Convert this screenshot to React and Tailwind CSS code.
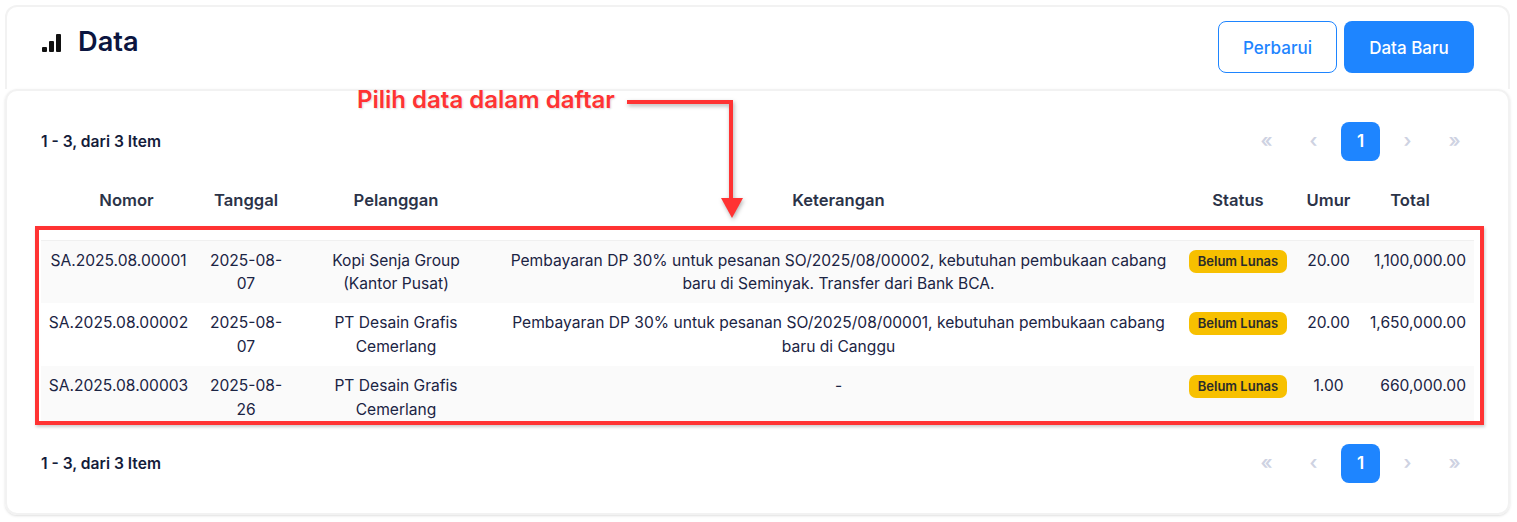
const rows = [
  {
    nomor: "SA.2025.08.00001",
    tanggal: "2025-08-07",
    pelanggan: "Kopi Senja Group (Kantor Pusat)",
    ket: "Pembayaran DP 30% untuk pesanan SO/2025/08/00002, kebutuhan pembukaan cabang baru di Seminyak. Transfer dari Bank BCA.",
    umur: "20.00",
    total: "1,100,000.00",
  },
  {
    nomor: "SA.2025.08.00002",
    tanggal: "2025-08-07",
    pelanggan: "PT Desain Grafis Cemerlang",
    ket: "Pembayaran DP 30% untuk pesanan SO/2025/08/00001, kebutuhan pembukaan cabang baru di Canggu",
    umur: "20.00",
    total: "1,650,000.00",
  },
  {
    nomor: "SA.2025.08.00003",
    tanggal: "2025-08-26",
    pelanggan: "PT Desain Grafis Cemerlang",
    ket: "-",
    umur: "1.00",
    total: "660,000.00",
  },
];

const Pagination = () => (
  <div className="flex items-center justify-between">
    <span className="text-[15.6px] font-semibold text-[#141c3a]">1 - 3, dari 3 Item</span>
    <div className="flex gap-2 text-[19px] font-semibold text-[#ced2e2]">
      <span className="flex h-[39px] w-[39px] items-center justify-center">«</span>
      <span className="flex h-[39px] w-[39px] items-center justify-center">‹</span>
      <span className="flex h-[39px] w-[39px] items-center justify-center rounded-lg bg-[#1e85ff] text-[17px] text-white">1</span>
      <span className="flex h-[39px] w-[39px] items-center justify-center">›</span>
      <span className="flex h-[39px] w-[39px] items-center justify-center">»</span>
    </div>
  </div>
);

const App = () => {
  return (
    <div className="relative h-[522px] w-[1517px] overflow-hidden bg-white pl-[5px] pr-[7px] pt-[5px] font-['Inter',sans-serif]">
      {/* header */}
      <div className="flex h-[84px] items-start justify-between rounded-t-xl border-2 border-b-0 border-[#f2f2f2] pl-[35px] pr-[34px] pt-[14px]">
        <div className="flex items-center gap-[17px]">
          <svg width="19" height="18" viewBox="0 0 19 18" className="mt-[1px]">
            <rect x="0" y="13" width="5" height="5" rx="1" fill="#111" />
            <rect x="7" y="7" width="5" height="11" rx="1" fill="#111" />
            <rect x="14" y="0" width="5" height="18" rx="1" fill="#111" />
          </svg>
          <h1 className="-mt-[1px] text-[27.2px] font-semibold leading-[44px] text-[#0b1540]">Data</h1>
        </div>
        <div className="flex gap-[7px]">
          <button className="h-[52px] w-[119px] rounded-lg border border-[#1e85ff] bg-white pt-[3px] text-[17px] font-medium text-[#1e85ff]">Perbarui</button>
          <button className="h-[52px] w-[130px] rounded-lg bg-[#1e85ff] pt-[3px] text-[17px] font-medium text-white">Data Baru</button>
        </div>
      </div>

      {/* content */}
      <div className="h-[426px] rounded-xl border-2 border-[#f2f2f2] px-[34px] pt-[31px] shadow-sm">
        <Pagination />
        <div className="h-[260px] overflow-hidden">
          <table className="w-full table-fixed text-[15.6px] leading-[23.4px] text-[#1b2444]">
            <colgroup>
              <col className="w-[155px]" />
              <col className="w-[100px]" />
              <col className="w-[200px]" />
              <col />
              <col className="w-[114px]" />
              <col className="w-[67px]" />
              <col className="w-[112px]" />
            </colgroup>
            <thead>
              <tr className="h-[79px] text-[16.6px] font-semibold text-[#2b3348]">
                <th className="pl-4 font-semibold">Nomor</th>
                <th className="font-semibold">Tanggal</th>
                <th className="font-semibold">Pelanggan</th>
                <th className="font-semibold">Keterangan</th>
                <th className="font-semibold">Status</th>
                <th className="font-semibold">Umur</th>
                <th className="pr-4 font-semibold">Total</th>
              </tr>
            </thead>
            <tbody>
              {rows.map((row, i) => (
                <tr key={row.nomor} className={`text-center align-top ${i % 2 === 0 ? "bg-[#fafafa]" : "bg-white"} ${i === 0 ? "border-t border-[#f0f0f0]" : ""}`}>
                  <td className="px-0 py-2">{row.nomor}</td>
                  <td className="px-2 py-2">{row.tanggal}</td>
                  <td className="px-4 py-2">{row.pelanggan}</td>
                  <td className="px-2 py-2">{row.ket}</td>
                  <td className="px-2 py-2">
                    <span className="mt-[1px] inline-block h-[23px] w-[98px] rounded-[7px] bg-[#f7c000] text-center text-[13px] font-semibold leading-[23px] text-[#2b2b2b]">
                      Belum Lunas
                    </span>
                  </td>
                  <td className="px-0 py-2">{row.umur}</td>
                  <td className="py-2 pl-0 pr-2 text-right">{row.total}</td>
                </tr>
              ))}
            </tbody>
          </table>
        </div>
        <div className="mt-[23px]">
          <Pagination />
        </div>
      </div>

      {/* annotation */}
      <span className="absolute left-[357px] top-[85px] text-[24px] font-semibold leading-[30px] text-[#ff3333] [text-shadow:1px_1px_2px_rgba(0,0,0,0.15)]">
        Pilih data dalam daftar
      </span>
      <svg width="130" height="130" viewBox="0 0 130 130" className="absolute left-[620px] top-[95px] drop-shadow-[1px_2px_2px_rgba(0,0,0,0.3)]">
        <path d="M7 7 H111 V105" fill="none" stroke="#ff3333" strokeWidth="4" />
        <path d="M101 103 H123 L112 123 Z" fill="#ff3333" />
      </svg>
      <div className="absolute left-[35px] top-[226px] h-[199px] w-[1449px] border-4 border-[#ff3333] shadow-[1px_2px_3px_rgba(0,0,0,0.2)]" />
    </div>
  );
};

export default App;
